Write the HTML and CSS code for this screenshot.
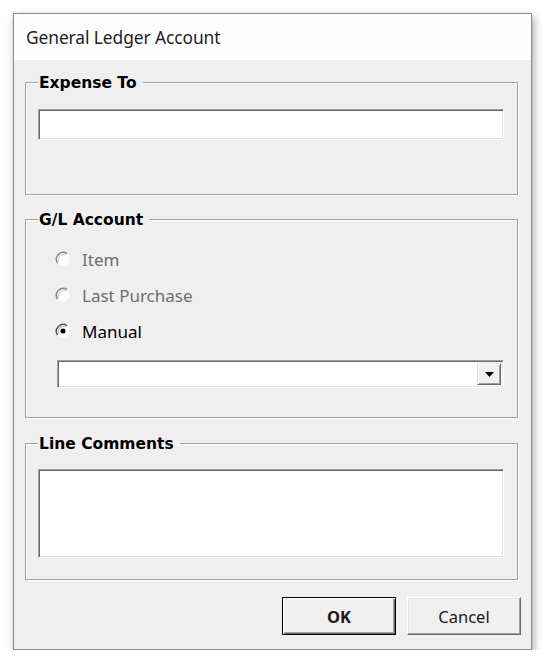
FILE: index.html
```html
<!DOCTYPE html>
<html>
<head>
<meta charset="utf-8">
<link rel="stylesheet" href="styles.css">
</head>
<body>
<div class="dialog">
  <div class="titlebar"><span class="title">General Ledger Account</span></div>
  <div class="content">
    <fieldset class="group group-expense">
      <legend>Expense To</legend>
      <div class="textbox"></div>
    </fieldset>
    <fieldset class="group group-gl">
      <legend>G/L Account</legend>
      <div class="radio disabled">
        <svg class="radio-icon" width="16" height="16" viewBox="0 0 14 14"><circle cx="7" cy="7" r="6" fill="#fdfdfd"/><path d="M10.5 2.2 A6 6 0 0 0 2.2 10.5" fill="none" stroke="#8a8a8a" stroke-width="1.3"/><path d="M9.6 3.4 A4.6 4.6 0 0 0 3.4 9.6" fill="none" stroke="#d0d0d0" stroke-width="1"/></svg>
        <span class="radio-label">Item</span>
      </div>
      <div class="radio disabled">
        <svg class="radio-icon" width="16" height="16" viewBox="0 0 14 14"><circle cx="7" cy="7" r="6" fill="#fdfdfd"/><path d="M10.5 2.2 A6 6 0 0 0 2.2 10.5" fill="none" stroke="#8a8a8a" stroke-width="1.3"/><path d="M9.6 3.4 A4.6 4.6 0 0 0 3.4 9.6" fill="none" stroke="#d0d0d0" stroke-width="1"/></svg>
        <span class="radio-label">Last Purchase</span>
      </div>
      <div class="radio">
        <svg class="radio-icon" width="16" height="16" viewBox="0 0 14 14"><circle cx="7" cy="7" r="6" fill="#ffffff"/><path d="M10.5 2.2 A6 6 0 0 0 2.2 10.5" fill="none" stroke="#555" stroke-width="1.3"/><path d="M9.6 3.4 A4.6 4.6 0 0 0 3.4 9.6" fill="none" stroke="#bbb" stroke-width="1"/><circle cx="7" cy="7" r="2.2" fill="#000"/></svg>
        <span class="radio-label">Manual</span>
      </div>
      <div class="combo">
        <div class="combo-btn">
          <svg width="9" height="5" viewBox="0 0 9 5"><path d="M0 0 H9 L4.5 5 Z" fill="#000"/></svg>
        </div>
      </div>
    </fieldset>
    <fieldset class="group group-comments">
      <legend>Line Comments</legend>
      <div class="textbox textarea"></div>
    </fieldset>
    <div class="buttons">
      <button class="btn btn-default">OK</button>
      <button class="btn">Cancel</button>
    </div>
  </div>
</div>
</body>
</html>
```
FILE: styles.css
```css
html, body {
  margin: 0;
  padding: 0;
  background: #ffffff;
}
body {
  padding: 13px 0 0 13px;
  font-family: "Noto Sans", "Open Sans", sans-serif;
}
.dialog {
  width: 519px;
  height: 637px;
  box-sizing: border-box;
  border: 1px solid #8c8c8c;
  box-shadow: 2px 3px 8px rgba(0, 0, 0, 0.35);
  background: #f0eff0;
  display: flex;
  flex-direction: column;
}
.titlebar {
  height: 46px;
  background: #fdfdfd;
  display: flex;
  align-items: center;
  padding-left: 12px;
}
.title {
  font-size: 17.4px;
  color: #1e1e1e;
  letter-spacing: -0.1px;
}
.content {
  padding: 12px 13px 0 11px;
  display: flex;
  flex-direction: column;
}
.group {
  margin: 0;
  border: 1px solid #a0a0a0;
  box-shadow: inset 1px 1px 0 #ffffff, 1px 1px 0 #ffffff;
  padding: 0 13px 0 12px;
  min-width: 0;
}
.group legend {
  font-family: "DejaVu Sans", sans-serif;
  font-weight: bold;
  font-size: 15.5px;
  line-height: 18px;
  height: 20px;
  padding: 2px 6px 0 1px;
  box-sizing: border-box;
  color: #000;
  background: #f0eff0;
}
.group-expense {
  padding-top: 17px;
  padding-bottom: 54px;
}
.group-gl {
  margin-top: 14px;
  padding-top: 12px;
  padding-bottom: 29px;
}
.group-comments {
  margin-top: 15px;
  padding-top: 16px;
  padding-bottom: 21px;
}
.textbox {
  height: 31px;
  box-sizing: border-box;
  background: #ffffff;
  border-style: solid;
  border-width: 1px;
  border-color: #a0a0a0 #ffffff #ffffff #a0a0a0;
  box-shadow: inset 1px 1px 0 #696969, inset -1px -1px 0 #e3e3e3;
}
.textarea {
  height: 89px;
}
.radio {
  height: 36px;
  display: flex;
  align-items: center;
  padding-left: 17px;
}
.radio-icon {
  flex: none;
}
.radio-label {
  margin-left: 11px;
  font-size: 17px;
  color: #000;
}
.radio.disabled .radio-label {
  color: #6d6d6d;
}
.combo {
  margin: 11px 0 0 19px;
  height: 28px;
  box-sizing: border-box;
  background: #ffffff;
  border-style: solid;
  border-width: 1px;
  border-color: #a0a0a0 #ffffff #ffffff #a0a0a0;
  box-shadow: inset 1px 1px 0 #696969, inset -1px -1px 0 #e3e3e3;
  display: flex;
  justify-content: flex-end;
  padding: 2px;
}
.combo-btn {
  width: 24px;
  box-sizing: border-box;
  background: #f0f0f0;
  border-style: solid;
  border-width: 1px;
  border-color: #e3e3e3 #696969 #696969 #e3e3e3;
  box-shadow: inset 1px 1px 0 #ffffff, inset -1px -1px 0 #a0a0a0;
  display: flex;
  align-items: center;
  justify-content: center;
}
.buttons {
  margin-top: 17px;
  display: flex;
  justify-content: flex-end;
  gap: 11px;
  margin-right: -3px;
}
.btn {
  width: 114px;
  height: 38px;
  box-sizing: border-box;
  margin: 0;
  font-family: "Noto Sans", "Open Sans", sans-serif;
  font-size: 16.5px;
  color: #1a1a1a;
  background: #f0f0f0;
  border-style: solid;
  border-width: 1px;
  border-color: #ffffff #696969 #696969 #ffffff;
  box-shadow: inset -1px -1px 0 #a0a0a0, inset 1px 1px 0 #e3e3e3;
  padding: 0;
}
.btn-default {
  font-weight: bold;
  border: 1px solid #000;
  box-shadow: inset 1px 1px 0 #ffffff, inset -1px -1px 0 #696969, inset -2px -2px 0 #a0a0a0;
}
```
